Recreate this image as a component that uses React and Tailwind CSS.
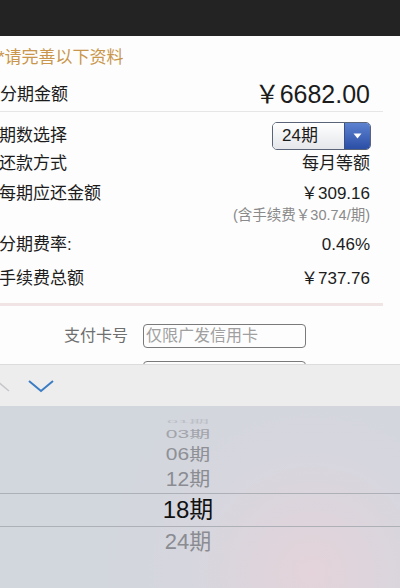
import React from "react";

const font = { fontFamily: '"Liberation Sans", "Noto Sans CJK SC", sans-serif' };

function Row({ label, value, className = "" }) {
  return (
    <div className={`flex items-center justify-between h-[28px] pr-[13px] ${className}`}>
      <span className="text-[17px] text-[#1c1c1c] -ml-[1px]">{label}</span>
      <span className="text-[17px] text-[#1c1c1c]">{value}</span>
    </div>
  );
}

export default function App() {
  return (
    <div className="w-[400px] h-[588px] flex flex-col overflow-hidden bg-white" style={font}>
      <div className="h-[36px] shrink-0 bg-[#232323]" />
      <div className="flex-1 overflow-hidden bg-[#fdfdfd]">
        <div className="w-[383px]">
          <div className="h-[42px] flex items-center pt-[2px]">
            <span className="text-[17px] text-[#c9964b] -ml-[2px]">*请完善以下资料</span>
          </div>
          <div className="h-[34px] flex items-center justify-between pr-[13px] border-b border-[#e6e6e6]">
            <span className="text-[17px] text-[#1c1c1c]">分期金额</span>
            <span className="text-[25px] text-[#1c1c1c] leading-none">￥6682.00</span>
          </div>
          <div className="flex items-center justify-between h-[28px] pr-[12px] mt-[10px]">
            <span className="text-[17px] text-[#1c1c1c] -ml-[1px]">期数选择</span>
            <div className="flex h-[28px] w-[99px] rounded-[5px] border border-[#5a6478] overflow-hidden shadow-[inset_0_1px_1px_rgba(255,255,255,0.9)]">
              <div className="flex-1 flex items-center pl-[9px] bg-[linear-gradient(#ffffff,#e4e6ea)] text-[17px] text-[#1c1c1c]">24期</div>
              <div className="w-[26px] flex items-center justify-center bg-[linear-gradient(#5d82d0,#2b4ea6)] border-l border-[#3a4f88]">
                <svg width="9" height="6" viewBox="0 0 9 6"><path d="M0.5 0.5h8L4.5 5.5z" fill="#fff" /></svg>
              </div>
            </div>
          </div>
          <Row label="还款方式" value="每月等额" />
          <Row label="每期应还金额" value="￥309.16" className="mt-[2px]" />
          <div className="h-[16px] flex items-center justify-end pr-[13px]">
            <span className="text-[14.5px] text-[#8a8a8a]">(含手续费￥30.74/期)</span>
          </div>
          <Row label="分期费率:" value="0.46%" className="mt-[7px]" />
          <Row label="手续费总额" value="￥737.76" className="mt-[6px]" />
          <div className="h-[3px] mt-[10px] bg-[#f1e4e5]" />
          <div className="flex items-center h-[24px] mt-[18px]">
            <span className="w-[128px] text-right text-[16px] text-[#6f6f6f]">支付卡号</span>
            <div className="ml-[15px] w-[163px] h-[24px] rounded-[4px] border-[1.5px] border-[#7a7a7a] flex items-center pl-[2px] text-[16px] text-[#a0a0a0]">
              仅限广发信用卡
            </div>
          </div>
          <div className="flex items-center h-[24px] mt-[13px]">
            <span className="w-[128px] text-right text-[16px] text-[#6f6f6f]">有效期</span>
            <div className="ml-[15px] w-[163px] h-[24px] rounded-[4px] border-[1.5px] border-[#7a7a7a]" />
          </div>
        </div>
      </div>
      <div className="h-[42px] shrink-0 bg-[#ededed] border-t border-[#dcdcdc] flex items-center">
        <svg className="-ml-[16px]" width="26" height="16" viewBox="0 0 26 16">
          <path d="M1 13L13 3L25 13" fill="none" stroke="#c6c6ca" strokeWidth="1.6" />
        </svg>
        <svg className="ml-[18px]" width="26" height="14" viewBox="0 0 26 14">
          <path d="M1 2L13 12L25 2" fill="none" stroke="#3b7dc4" strokeWidth="2" />
        </svg>
      </div>
      <div className="h-[182px] shrink-0 flex flex-col bg-[radial-gradient(circle_at_78%_92%,#e4d3da_0%,#d6d6de_35%,#d2d6dd_60%)]">
        <div className="pr-[24px] flex flex-col items-center pt-[12px]">
          <div className="h-[6px] text-[20px] leading-[6px] text-[#bcbfc6] scale-y-[0.22] overflow-visible">01期</div>
          <div className="h-[12px] mt-[4px] flex items-center text-[21px] text-[#a2a4aa] scale-y-[0.5]">03期</div>
          <div className="h-[22px] mt-[4px] flex items-center text-[21px] text-[#8e9096] scale-y-[0.78]">06期</div>
          <div className="h-[26px] mt-[1px] flex items-center text-[21px] text-[#8a8c92] scale-y-[0.92]">12期</div>
        </div>
        <div className="h-[34px] border-y border-[#adb0b7] flex items-center justify-center pr-[24px]">
          <span className="text-[24px] text-[#111]">18期</span>
        </div>
        <div className="pr-[24px] flex flex-col items-center">
          <div className="h-[28px] flex items-center text-[22px] text-[#8a8c92]">24期</div>
        </div>
      </div>
    </div>
  );
}
